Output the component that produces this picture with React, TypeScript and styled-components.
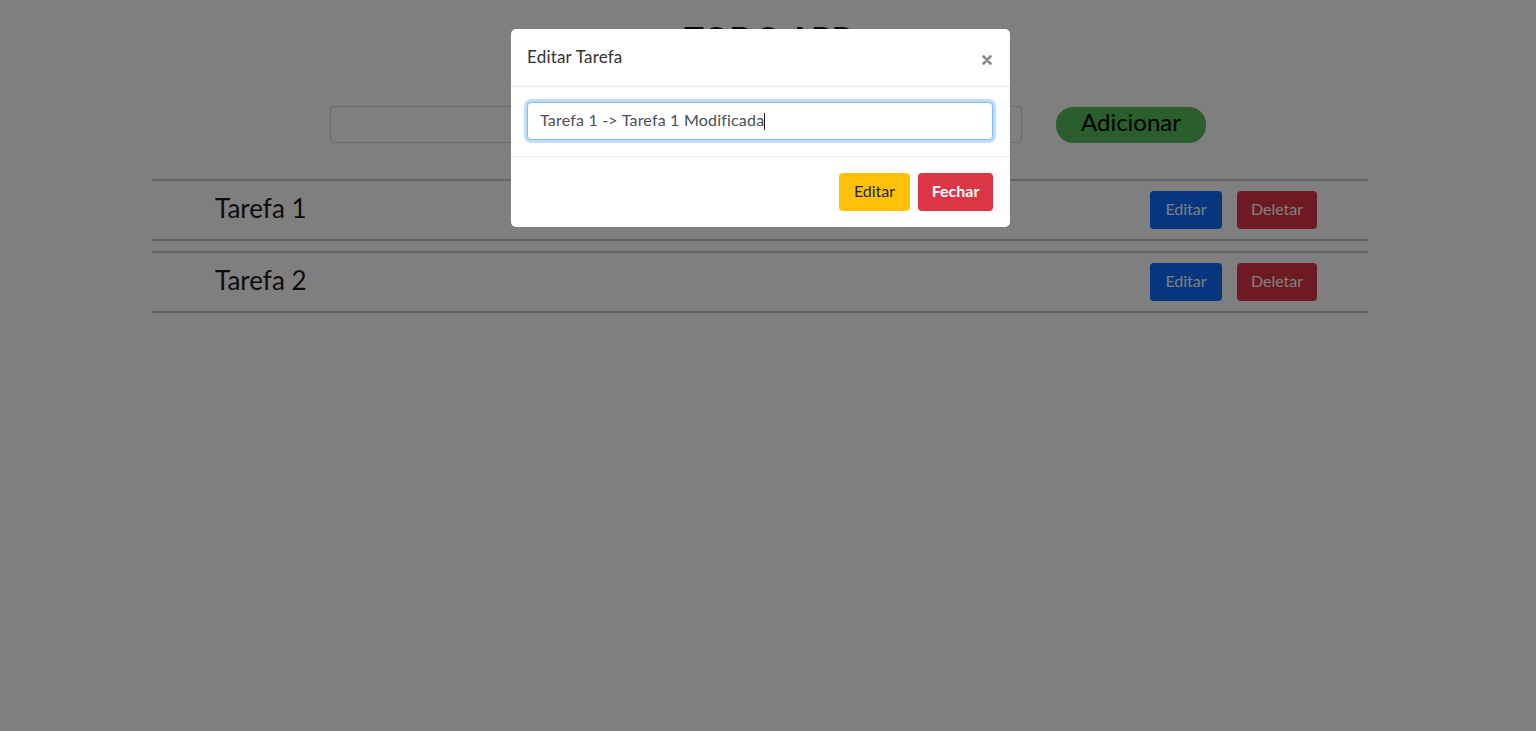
import React from "react";
import styled, { createGlobalStyle } from "styled-components";

const Global = createGlobalStyle`
  html, body { margin: 0; padding: 0; background: #ffffff; }
  body { font-family: "Lato", "Liberation Sans", sans-serif; color: #212529; overflow: hidden; }
  * { box-sizing: border-box; }
`;

const Page = styled.div`
  width: 1536px;
  height: 731px;
`;

const Header = styled.header`
  display: flex;
  flex-direction: column;
  align-items: center;
`;

const Title = styled.h1`
  margin: 14px 0 0;
  height: 50px;
  font-size: 33px;
  line-height: 48px;
  font-weight: 700;
  color: #111;
`;

const AddForm = styled.form`
  display: flex;
  align-items: center;
  gap: 34px;
  margin-top: 42px;
`;

const AddInput = styled.input`
  width: 692px;
  height: 37px;
  border: 1px solid #d4d4d4;
  border-radius: 4px;
  padding: 0 12px;
  font: inherit;
`;

const AddButton = styled.button`
  width: 150px;
  height: 36px;
  border: none;
  border-radius: 17px;
  background: #54bd58;
  color: #000;
  font-family: inherit;
  font-size: 24px;
  line-height: 30px;
  padding: 0 0 5px;
`;

const ListSection = styled.section`
  padding-right: 16px;
  margin-top: 36px;
`;

const List = styled.ul`
  list-style: none;
  width: 1216px;
  margin: 0 auto;
  padding: 0;
  display: flex;
  flex-direction: column;
  gap: 10px;
`;

const Item = styled.li`
  height: 62px;
  border-top: 2px solid #c9c9c9;
  border-bottom: 2px solid #c9c9c9;
  display: flex;
  align-items: center;
  padding: 0 51px 1px 63px;
`;

const ItemText = styled.span`
  flex: 1;
  font-size: 26px;
  color: #1a1a1a;
  padding-bottom: 3px;
`;

const Actions = styled.div`
  display: flex;
  gap: 15px;
`;

const Btn = styled.button<{ $bg: string; $fg: string; $w: number; $bold?: boolean }>`
  width: ${(p) => p.$w}px;
  height: 38px;
  border: none;
  border-radius: 4px;
  background: ${(p) => p.$bg};
  color: ${(p) => p.$fg};
  font-family: inherit;
  font-size: 16px;
  font-weight: ${(p) => (p.$bold ? 700 : 400)};
  padding: 0 0 3px;
`;

const Backdrop = styled.div`
  position: fixed;
  inset: 0;
  background: rgba(0, 0, 0, 0.5);
`;

const ModalWrap = styled.div`
  position: fixed;
  inset: 0;
  padding-right: 15px;
  display: flex;
  justify-content: center;
  align-items: flex-start;
`;

const Dialog = styled.div`
  width: 499px;
  margin-top: 29px;
  background: #fff;
  border-radius: 5px;
  display: flex;
  flex-direction: column;
`;

const ModalHeader = styled.div`
  height: 58px;
  border-bottom: 1px solid #e9ecef;
  display: flex;
  align-items: center;
  justify-content: space-between;
  padding: 0 17px 0 16px;
`;

const ModalTitle = styled.h5`
  margin: 0;
  font-size: 17px;
  font-weight: 400;
  color: #333;
  letter-spacing: 0.2px;
  position: relative;
  top: -1px;
`;

const CloseBtn = styled.button`
  border: none;
  background: none;
  padding: 0;
  width: 12px;
  height: 12px;
  display: flex;
  align-items: center;
  justify-content: center;
  position: relative;
  top: 2px;
`;

const ModalBody = styled.div`
  padding: 15px 17px 16px 16px;
  border-bottom: 1px solid #e9ecef;
`;

const EditField = styled.div`
  position: relative;
`;

const EditInput = styled.input`
  width: 100%;
  height: 38px;
  border: 1px solid #80bdff;
  border-radius: 4px;
  box-shadow: 0 0 0 3px rgba(0, 123, 255, 0.25);
  outline: none;
  padding: 0 12px 3px;
  font-family: inherit;
  font-size: 16px;
  letter-spacing: 0.2px;
  color: #495057;
  caret-color: transparent;
`;

const Caret = styled.span`
  position: absolute;
  left: 237px;
  top: 11px;
  width: 1px;
  height: 17px;
  background: #222;
  pointer-events: none;
`;

const ModalFooter = styled.div`
  display: flex;
  justify-content: flex-end;
  gap: 8px;
  padding: 16px 17px 16px 16px;
`;

export default function App() {
  return (
    <Page>
      <Global />
      <Header>
        <Title>TODO APP</Title>
        <AddForm onSubmit={(e) => e.preventDefault()}>
          <AddInput type="text" />
          <AddButton type="submit">Adicionar</AddButton>
        </AddForm>
      </Header>
      <ListSection>
        <List>
          {["Tarefa 1", "Tarefa 2"].map((t) => (
            <Item key={t}>
              <ItemText>{t}</ItemText>
              <Actions>
                <Btn $bg="#0d6efd" $fg="#fff" $w={72}>Editar</Btn>
                <Btn $bg="#dc3545" $fg="#fff" $w={80}>Deletar</Btn>
              </Actions>
            </Item>
          ))}
        </List>
      </ListSection>
      <Backdrop />
      <ModalWrap>
        <Dialog role="dialog">
          <ModalHeader>
            <ModalTitle>Editar Tarefa</ModalTitle>
            <CloseBtn aria-label="Fechar">
              <svg width="10" height="10" viewBox="0 0 10 10">
                <path d="M1.5 1.5 L8.5 8.5 M8.5 1.5 L1.5 8.5" stroke="#8a8a8a" strokeWidth="2.6" strokeLinecap="round" />
              </svg>
            </CloseBtn>
          </ModalHeader>
          <ModalBody>
            <EditField>
              <EditInput type="text" defaultValue="Tarefa 1 -> Tarefa 1 Modificada" />
              <Caret />
            </EditField>
          </ModalBody>
          <ModalFooter>
            <Btn $bg="#ffc107" $fg="#212529" $w={71}>Editar</Btn>
            <Btn $bg="#dc3545" $fg="#fff" $w={75} $bold>Fechar</Btn>
          </ModalFooter>
        </Dialog>
      </ModalWrap>
    </Page>
  );
}
